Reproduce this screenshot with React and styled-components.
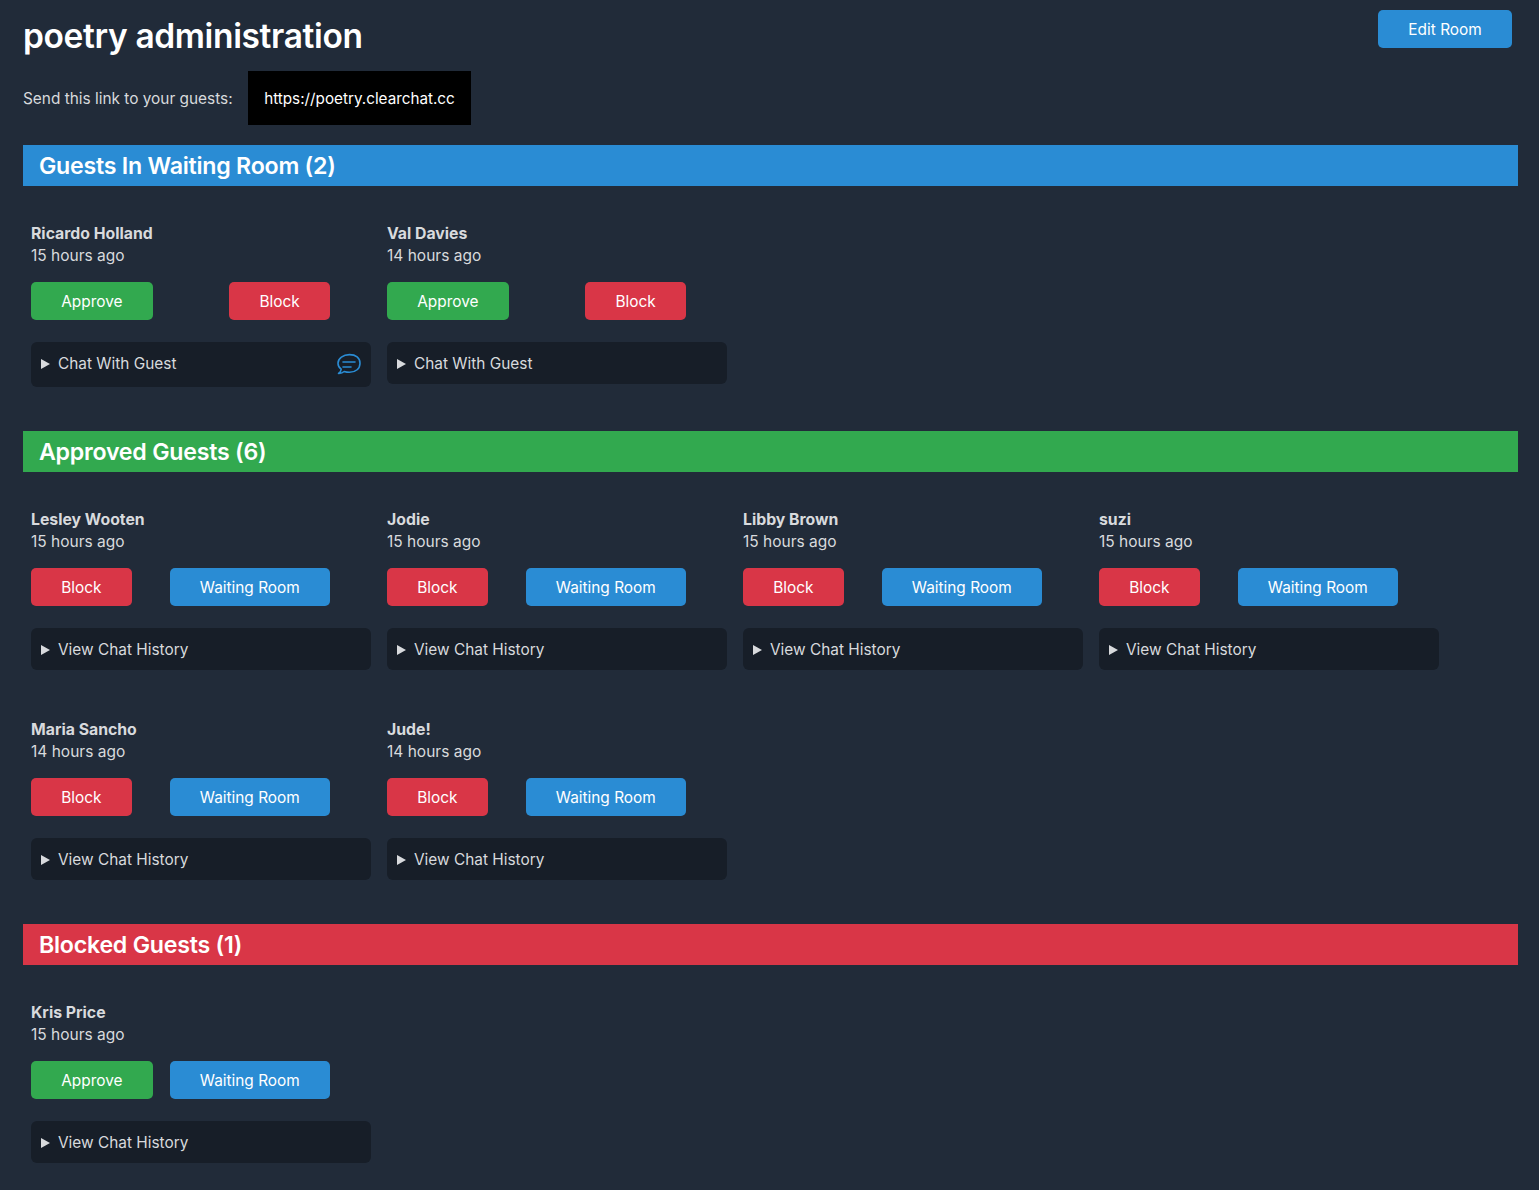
import React from 'react'
import styled, { createGlobalStyle } from 'styled-components'

const GlobalStyle = createGlobalStyle`
  body {
    margin: 0;
    background: #212b39;
    color: #d8dadd;
    font-family: Inter, "Liberation Sans", sans-serif;
    font-size: 15.5px;
    line-height: 22px;
  }
`

const Page = styled.div`
  padding: 10px 21px 20px 23px;
`
const TopBar = styled.div`
  display: flex;
  justify-content: space-between;
  align-items: flex-start;
  padding-right: 6px;
  height: 61px;
`
const Title = styled.h1`
  margin: 4px 0 0;
  font-size: 33.5px;
  line-height: 44px;
  font-weight: 600;
  letter-spacing: -0.36px;
  color: #fff;
`
const LinkRow = styled.div`
  display: flex;
  align-items: baseline;
  gap: 15.5px;
  font-size: 15.4px;
  margin-bottom: 20px;
`
const LinkBox = styled.div`
  background: #000;
  color: #fff;
  font-size: 15.25px;
  padding: 17px 16px 15px;
`
const Banner = styled.h2`
  margin: 0;
  background: ${(p) => p.$color};
  color: #fff;
  font-size: 23.2px;
  font-weight: 600;
  line-height: 40px;
  padding: 1px 0 0 16px;
  letter-spacing: -0.25px;
`
const Grid = styled.div`
  display: flex;
  flex-wrap: wrap;
  row-gap: 32px;
  padding-top: 28px;
  margin-bottom: 36px;
`
const Card = styled.div`
  box-sizing: border-box;
  width: 356px;
  padding: 9px 8px 8px;
`
const Name = styled.div`
  font-weight: 700;
  font-size: 15.8px;
`
const Since = styled.div`
  font-size: 15.5px;
`
const Actions = styled.div`
  display: flex;
  justify-content: space-between;
  width: 299px;
  margin-top: 15px;
`
const Button = styled.button`
  height: 38px;
  padding: 2px 30.25px 0;
  border: 0;
  border-radius: 5px;
  background: ${(p) => p.$color};
  color: #fff;
  font: inherit;
  font-size: 15.4px;
  white-space: nowrap;
`
const Disclosure = styled.div`
  display: flex;
  align-items: flex-start;
  box-sizing: border-box;
  width: 340px;
  min-height: 42px;
  margin-top: 22px;
  padding: 10px 10px 8px;
  background: #171e28;
  border-radius: 6px;
  font-size: 15.4px;
`
const Summary = styled.div`
  display: flex;
  align-items: center;
  height: 24px;
`
const Triangle = styled.span`
  width: 0;
  height: 0;
  margin-right: 8px;
  border-left: 9px solid #d8dadd;
  border-top: 5px solid transparent;
  border-bottom: 5px solid transparent;
`
const NoteIcon = styled.svg`
  margin: -1px 0 0 auto;
  padding-bottom: 1px;
  display: block;
`

const BLUE = '#2a8cd4'
const GREEN = '#32a94f'
const RED = '#d93647'

const ChatIcon = () => (
  <NoteIcon width="26" height="27" viewBox="0 0 26 27" fill="none" stroke={BLUE} strokeWidth="1.6" strokeLinecap="round" strokeLinejoin="round">
    <path d="M14.500 3.600C8.200 3.600 3 7.300 3 12.200c0 2.400 1.200 4.500 3.200 6-.1 1.800-1.300 3.300-2.700 4.200 2.300.1 4.300-.6 5.700-1.900 1.600.5 3.300.8 5.300.8 6.300 0 10.500-3.800 10.500-9.100S20.800 3.600 14.500 3.600z" />
    <path d="M8 11h12M8 16h8" />
  </NoteIcon>
)

const GuestCard = ({ name, since, actions, chat, unread }) => (
  <Card>
    <Name>{name}</Name>
    <Since>{since}</Since>
    <Actions>
      {actions.map(([label, color]) => (
        <Button key={label} $color={color}>{label}</Button>
      ))}
    </Actions>
    <Disclosure>
      <Summary>
        <Triangle />
        {chat}
      </Summary>
      {unread && <ChatIcon />}
    </Disclosure>
  </Card>
)

const approve = ['Approve', GREEN]
const block = ['Block', RED]
const waiting = ['Waiting Room', BLUE]

const approved = [
  ['Lesley Wooten', '15 hours ago'],
  ['Jodie', '15 hours ago'],
  ['Libby Brown', '15 hours ago'],
  ['suzi', '15 hours ago'],
  ['Maria Sancho', '14 hours ago'],
  ['Jude!', '14 hours ago'],
]

export default function App() {
  return (
    <Page>
      <GlobalStyle />
      <TopBar>
        <Title>poetry administration</Title>
        <Button $color={BLUE}>Edit Room</Button>
      </TopBar>
      <LinkRow>
        Send this link to your guests:
        <LinkBox>https://poetry.clearchat.cc</LinkBox>
      </LinkRow>

      <Banner $color={BLUE}>Guests In Waiting Room (2)</Banner>
      <Grid>
        <GuestCard name="Ricardo Holland" since="15 hours ago" actions={[approve, block]} chat="Chat With Guest" unread />
        <GuestCard name="Val Davies" since="14 hours ago" actions={[approve, block]} chat="Chat With Guest" />
      </Grid>

      <Banner $color={GREEN}>Approved Guests (6)</Banner>
      <Grid>
        {approved.map(([name, since]) => (
          <GuestCard key={name} name={name} since={since} actions={[block, waiting]} chat="View Chat History" />
        ))}
      </Grid>

      <Banner $color={RED}>Blocked Guests (1)</Banner>
      <Grid>
        <GuestCard name="Kris Price" since="15 hours ago" actions={[approve, waiting]} chat="View Chat History" />
      </Grid>
    </Page>
  )
}
